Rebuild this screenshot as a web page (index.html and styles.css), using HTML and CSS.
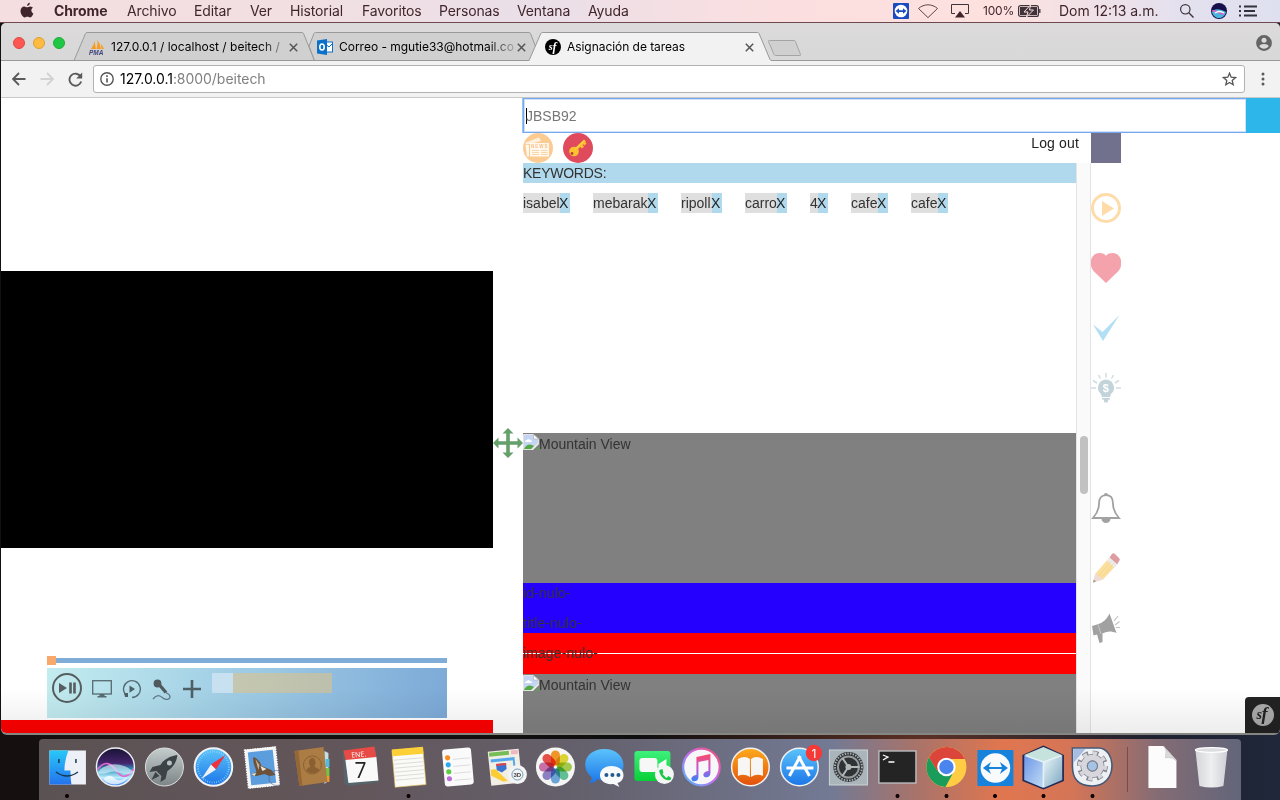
FILE: index.html
```html
<!DOCTYPE html>
<html lang="es">
<head>
<meta charset="utf-8">
<title>Asignación de tareas</title>
<link rel="stylesheet" href="styles.css">
</head>
<body>
<svg class="defs" width="0" height="0">
  <defs>
    <linearGradient id="gBlue" x1="0" y1="0" x2="0" y2="1"><stop offset="0" stop-color="#5cc3fb"/><stop offset="1" stop-color="#1b76e8"/></linearGradient>
    <linearGradient id="gFinder" x1="0" y1="0" x2="0" y2="1"><stop offset="0" stop-color="#27c8f8"/><stop offset="1" stop-color="#2473ee"/></linearGradient>
    <linearGradient id="gSiri" x1="0" y1="0" x2="0" y2="1"><stop offset="0" stop-color="#171433"/><stop offset=".4" stop-color="#45246c"/><stop offset=".55" stop-color="#2f8fb8"/><stop offset=".78" stop-color="#b9eeff"/><stop offset="1" stop-color="#3a7ff0"/></linearGradient>
    <linearGradient id="gSilver" x1="0" y1="0" x2="0" y2="1"><stop offset="0" stop-color="#c4cccc"/><stop offset="1" stop-color="#7c8486"/></linearGradient>
    <linearGradient id="gOrange" x1="0" y1="0" x2="0" y2="1"><stop offset="0" stop-color="#fdab1d"/><stop offset="1" stop-color="#e2500c"/></linearGradient>
    <linearGradient id="gGreen" x1="0" y1="0" x2="0" y2="1"><stop offset="0" stop-color="#3df17b"/><stop offset="1" stop-color="#08cf37"/></linearGradient>
    <linearGradient id="gNote" x1="0" y1="0" x2="0" y2="1"><stop offset="0" stop-color="#fb4b63"/><stop offset=".55" stop-color="#c158d8"/><stop offset="1" stop-color="#2e86f7"/></linearGradient>
    <linearGradient id="gRing" x1="1" y1="0" x2="0" y2="1"><stop offset="0" stop-color="#f3526b"/><stop offset=".5" stop-color="#c66af0"/><stop offset="1" stop-color="#48bdfc"/></linearGradient>
    <linearGradient id="gTrash" x1="0" y1="0" x2="1" y2="0"><stop offset="0" stop-color="#d4d5d9"/><stop offset=".5" stop-color="#efeff1"/><stop offset="1" stop-color="#cdcfd4"/></linearGradient>
    <linearGradient id="gCubeL" x1="0" y1="0" x2="1" y2="1"><stop offset="0" stop-color="#6c96e8"/><stop offset="1" stop-color="#c2dcf4"/></linearGradient>
    <linearGradient id="gCubeR" x1="0" y1="0" x2="1" y2="1"><stop offset="0" stop-color="#eef8fb"/><stop offset="1" stop-color="#7aa6c0"/></linearGradient>
  </defs>
</svg>

<header class="menubar">
  <svg class="apple" width="16" height="20" viewBox="0 0 16 20"><path d="M8.200 6.300c.8 0 1.700-1 3.200-.9 1.100.1 2 .6 2.500 1.400-2.300 1.400-1.900 4.700.5 5.600-.6 1.700-1.900 4-3.300 4-1 0-1.500-.6-2.700-.6s-1.700.6-2.700.6C3.800 16.400 1.500 12.800 1.500 10c0-2.800 1.800-4.600 3.700-4.600 1.300 0 2.200.9 3 .9zM10.900 1.800c.1 1.600-1.200 3.100-2.800 3.100-.1-1.500 1.300-3 2.800-3.100z" fill="#40262c"/></svg>
  <nav class="menus">
    <b class="m1">Chrome</b><span class="m2">Archivo</span><span class="m3">Editar</span><span class="m4">Ver</span><span class="m5">Historial</span><span class="m6">Favoritos</span><span class="m7">Personas</span><span class="m8">Ventana</span><span class="m9">Ayuda</span>
  </nav>
  <div class="status">
    <svg width="16" height="16" viewBox="0 0 16 16"><rect width="16" height="16" rx="1" fill="#1a4ac0"/><circle cx="8" cy="8" r="6.300" fill="#fff"/><path d="M2.600 8l3.400-2.700v1.900h4V5.300L13.400 8 10 10.700V8.900H6v1.800z" fill="#1a4ac0"/></svg>
    <svg class="wifi" width="22" height="16" viewBox="0 0 22 16"><path d="M1.500 5.500C7 .6 15 .6 20.500 5.500L11 14.600z" fill="none" stroke="#5c474c"/></svg>
    <svg class="airplay" width="20" height="16" viewBox="0 0 20 16"><path d="M5 10.500H1.500v-9h17v9H15" fill="none" stroke="#40323a"/><path d="M10 8l5 6.500H5z" fill="#40262c"/></svg>
    <span class="pct">100%</span>
    <svg class="battery" width="24" height="12" viewBox="0 0 24 12"><rect x=".6" y=".6" width="19.800" height="10.800" rx="2" fill="none" stroke="#40323a" stroke-width="1.200"/><rect x="2" y="2" width="17" height="8" fill="#40323a"/><path d="M12.500 0L6 7h4l-1.500 5L15.500 5h-4z" fill="#40323a" stroke="#fbe2e2"/><path d="M21.800 4v4" stroke="#40323a" stroke-width="1.300"/></svg>
    <span class="clock">Dom 12:13 a.m.</span>
    <svg class="search" width="16" height="16" viewBox="0 0 16 16"><circle cx="6.300" cy="6.300" r="4.700" fill="none" stroke="#40323a" stroke-width="1.200"/><path d="M9.800 9.800l4.700 4.700" stroke="#40323a" stroke-width="1.400"/></svg>
    <svg class="siri" width="16" height="16" viewBox="0 0 16 16"><circle cx="8" cy="8" r="8" fill="#17104a"/><path d="M1 9c3-4 8-3 14 0-1 4-4 6-7 6S2 13 1 9z" fill="#49b6de"/><path d="M1 8c4-2 6 3 12 3" stroke="#dc59c4" stroke-width="1.500" fill="none"/><path d="M4 10c3-2 6-2 9 0" stroke="#fff" stroke-width="1.500" fill="none"/></svg>
    <svg width="19" height="12" viewBox="0 0 19 12"><path d="M5 1.500h13M5 6h11M5 10.500h13" stroke="#33323c" stroke-width="2"/><path d="M0 1.500h2M0 6h2M0 10.500h2" stroke="#33323c" stroke-width="2"/></svg>
  </div>
</header>

<div class="window">
  <div class="tabstrip">
    <svg class="tabshape" width="1279" height="38" viewBox="1 23 1279 38">
      <path d="M74 60.500L85.500 33.500Q86 32.500 87 32.500H302Q303 32.500 303.500 33.500L314.500 60.500z" fill="#d0d0d0" stroke="#999"/>
      <path d="M309 46L314 33.500Q314.500 32.500 315.500 32.500H529Q530 32.500 530.500 33.500L541 60.500H314.500z" fill="#d0d0d0" stroke="#999"/>
      <path d="M1 60.500H1280" stroke="#999"/>
      <path d="M529 61L541 33.500Q541.500 32.500 542.500 32.500H757.500Q758.500 32.500 759 33.500L770 59.500L771.500 61z" fill="#f2f2f2"/>
      <path d="M529 60.500L540.800 33.500Q541.300 32.500 542.300 32.500H757.500Q758.500 32.500 759 33.500L770 59.500Q770.500 60.500 772 60.500" fill="none" stroke="#999"/>
      <path d="M769.500 40.500H794Q795 40.500 795.500 41.500L800.500 54.500Q801 55.500 800 55.500H775.500Q774.500 55.500 774 54.500L768.500 41.500Q768 40.500 769.500 40.500z" fill="#d0d0d0" stroke="#a5a5a5"/>
    </svg>
    <div class="lights"><i class="red"></i><i class="yellow"></i><i class="green"></i></div>
    <div class="tab t1">
      <svg width="16" height="16" viewBox="0 0 16 16"><path d="M2 10Q5 6 5.500 2l1.500 8zM7.500 10Q9 5 8.500 1q3 4 3.500 9zM12.500 10l-.5-5q2 2 3 5z" fill="#f89c21"/><text x="0" y="15.500" class="pma">PMA</text></svg>
      <span class="label fade">127.0.0.1 / localhost / beitech /</span>
      <svg class="x" width="9" height="9" viewBox="0 0 9 9"><path d="M.8.8l7.400 7.400M8.200.8L.8 8.200" stroke="#555" stroke-width="1.500"/></svg>
    </div>
    <div class="tab t2">
      <svg width="16" height="16" viewBox="0 0 16 16"><rect x="7" y="3" width="8.500" height="10" fill="#fff" stroke="#0a70c8"/><path d="M9 5.500l3 2.500 3.500-3.500" stroke="#0a70c8" fill="none"/><path d="M0 1.500L10 0v16L0 14.500z" fill="#0a70c8"/><ellipse cx="5" cy="8" rx="2.200" ry="3" fill="none" stroke="#fff" stroke-width="1.600"/></svg>
      <span class="label fade">Correo - mgutie33@hotmail.co</span>
      <svg class="x" width="9" height="9" viewBox="0 0 9 9"><path d="M.8.8l7.400 7.400M8.200.8L.8 8.200" stroke="#555" stroke-width="1.500"/></svg>
    </div>
    <div class="tab t3">
      <svg width="16" height="16" viewBox="0 0 16 16"><circle cx="8" cy="8" r="8" fill="#000"/><text x="3.800" y="11" class="sf" fill="#fff">s<tspan dy="1" dx="-.3" class="sff">f</tspan></text></svg>
      <span class="label">Asignación de tareas</span>
      <svg class="x" width="9" height="9" viewBox="0 0 9 9"><path d="M.8.8l7.400 7.400M8.200.8L.8 8.200" stroke="#555" stroke-width="1.500"/></svg>
    </div>
    <svg class="profile" width="16" height="16" viewBox="0 0 16 16"><circle cx="8" cy="8" r="7.900" fill="#646464"/><circle cx="8" cy="5.300" r="2.500" fill="#dadada"/><path d="M3.300 11.300c1-3 8.400-3 9.400 0-2 3.200-7.400 3.200-9.400 0z" fill="#dadada"/></svg>
  </div>

  <div class="toolbar">
    <svg class="back" width="14" height="14" viewBox="0 0 14 14"><path d="M13.500 7H1.500M7 1L1 7l6 6" fill="none" stroke="#5a5a5a" stroke-width="1.800"/></svg>
    <svg class="fwd" width="14" height="14" viewBox="0 0 14 14"><path d="M.5 7h12M7 1l6 6-6 6" fill="none" stroke="#d2d2d2" stroke-width="1.800"/></svg>
    <svg class="reload" width="15" height="15" viewBox="0 0 15 15"><path d="M12.600 4.500A6 6 0 1 0 13.200 9.500" fill="none" stroke="#5a5a5a" stroke-width="1.900"/><path d="M14.200.5v6H8.200z" fill="#5a5a5a"/></svg>
    <div class="omnibox">
      <svg width="14" height="14" viewBox="0 0 14 14"><circle cx="7" cy="7" r="6.200" fill="none" stroke="#555" stroke-width="1.400"/><path d="M7 6.200v4.400M7 3.300v1.700" stroke="#555" stroke-width="1.600"/></svg>
      <span class="url">127.0.0.1<em>:8000/beitech</em></span>
      <svg class="star" width="15" height="14" viewBox="0 0 15 14"><path d="M7.500 1.200l1.700 4 4.300.4-3.300 2.800 1 4.300-3.700-2.300-3.700 2.300 1-4.300L1.500 5.600l4.300-.4z" fill="none" stroke="#555" stroke-width="1.300"/></svg>
    </div>
    <svg class="dots" width="4" height="14" viewBox="0 0 4 14"><g fill="#5a5a5a"><circle cx="2" cy="2" r="1.500"/><circle cx="2" cy="7" r="1.500"/><circle cx="2" cy="12" r="1.500"/></g></svg>
  </div>

  <main class="page">
    <section class="left">
      <div class="video"></div>
      <div class="player">
        <div class="track"><i class="knob"></i></div>
        <div class="controls">
          <svg class="c1" width="30" height="30" viewBox="0 0 30 30"><circle cx="15" cy="15" r="14" fill="none" stroke="#555d5f" stroke-width="2"/><path d="M7 10v10l8-5z" fill="#555d5f"/><path d="M18.500 9.500v11M22.500 9.500v11" stroke="#555d5f" stroke-width="2.600"/></svg>
          <svg class="c2" width="20" height="18" viewBox="0 0 20 18"><rect x=".7" y=".7" width="18.600" height="13.300" fill="none" stroke="#566a70" stroke-width="1.300"/><path d="M7.500 14h5v2h2v1.500h-9V16h2z" fill="#566a70"/></svg>
          <svg class="c3" width="20" height="20" viewBox="0 0 20 20"><path d="M3.500 15.500A8.400 8.400 0 1 1 10 18.500" fill="none" stroke="#556c76" stroke-width="1.400"/><path d="M7.500 6.500v7.200l5.500-3.600zM2 14h4v4H3z" fill="#4f5f66"/></svg>
          <svg class="c4" width="20" height="21" viewBox="0 0 20 21"><circle cx="5.500" cy="4.500" r="3.900" fill="#505a5e"/><path d="M7.500 6l6.500 7.500" stroke="#505a5e" stroke-width="3.300"/><path d="M1 20c4-5 7-3.500 10-1s7 1.500 7-1.500c0-2-2-2.500-4-4" fill="none" stroke="#607985" stroke-width="1.300"/></svg>
          <svg class="c5" width="18" height="18" viewBox="0 0 18 18"><path d="M9 0v18M0 9h18" stroke="#4f5f66" stroke-width="2.600"/></svg>
          <div class="volume"><i></i></div>
        </div>
      </div>
      <div class="redbar"></div>
    </section>

    <div class="handle">
      <svg width="30" height="30" viewBox="0 0 30 30"><path d="M15 0l5.500 5.500h-3.700v7.700h7.700V9.500L30 15l-5.500 5.500v-3.700h-7.700v7.700h3.700L15 30l-5.500-5.500h3.700v-7.700H5.500v3.700L0 15l5.500-5.500v3.700h7.700V5.500H9.500z" fill="#64a06a"/></svg>
    </div>

    <section class="right">
      <div class="searchrow">
        <div class="searchbox"><i class="caret"></i><span>JBSB92</span></div>
        <div class="go"></div>
      </div>
      <div class="cols">
        <div class="feed">
          <div class="actions">
            <svg width="30" height="30" viewBox="0 0 30 30"><circle cx="15" cy="15" r="15" fill="#fccb92"/><path d="M1.500 10L16 4.500 18 8l-14 3.500z" fill="#fff1e0"/><path d="M7 10h19v13.500H7zM2.500 12H6v11.500H4z" fill="#fff8ee"/><path d="M9 17.500h7M9 19.500h7M9 21.500h7M18 17.500h6.500M18 19.500h6.500M18 21.500h6.500" stroke="#fccb92" stroke-width=".8"/><text x="8" y="15" class="news">NEWS</text></svg>
            <svg width="30" height="30" viewBox="0 0 30 30"><circle cx="15" cy="15" r="15" fill="#e04a5d"/><path d="M12 17L22 7.500M17.500 12l2.500 2.500M20.500 9.500l2 2" stroke="#fbc12f" stroke-width="3"/><circle cx="11" cy="18.500" r="4.800" fill="#fbc12f"/><circle cx="9" cy="20.500" r="1.400" fill="#b83c48"/><path d="M12 16.500L21.500 7.500" stroke="#fbd84f" stroke-width="1"/></svg>
            <span class="logout">Log out</span>
          </div>
          <div class="scroller">
            <div class="list">
              <div class="kw">KEYWORDS:</div>
              <div class="tags">
                <span class="tag w1">isabel<b>X</b></span><span class="tag w2">mebarak<b>X</b></span><span class="tag w3">ripoll<b>X</b></span><span class="tag w4">carro<b>X</b></span><span class="tag w5">4<b>X</b></span><span class="tag w6">cafe<b>X</b></span><span class="tag w7">cafe<b>X</b></span>
              </div>
              <div class="card">
                <div class="thumb"><svg width="16" height="16" viewBox="0 0 16 16"><path d="M.5.500h10l5 4.500v3L9 15.500H.5z" fill="#c3d5f2" stroke="#e3e3e3"/><path d="M10.500.5V5h5z" fill="#fff" stroke="#aaa" stroke-width=".6"/><path d="M2 8q0-2 2-2 1-2 3 0 2 0 2 2z" fill="#fff"/><path d="M1 15q3-6 8-4l2 1-3 3zM12 15.500l3.500-3v3z" fill="#55a844"/><path d="M8 16l8-8v2l-6 6z" fill="#eee"/></svg>Mountain View</div>
                <div class="meta"><p>id-nulo-</p><p>title-nulo-</p></div>
                <div class="img"><p>image-nulo-</p></div>
              </div>
              <div class="card">
                <div class="thumb"><svg width="16" height="16" viewBox="0 0 16 16"><path d="M.5.500h10l5 4.500v3L9 15.500H.5z" fill="#c3d5f2" stroke="#e3e3e3"/><path d="M10.500.5V5h5z" fill="#fff" stroke="#aaa" stroke-width=".6"/><path d="M2 8q0-2 2-2 1-2 3 0 2 0 2 2z" fill="#fff"/><path d="M1 15q3-6 8-4l2 1-3 3zM12 15.500l3.500-3v3z" fill="#55a844"/><path d="M8 16l8-8v2l-6 6z" fill="#eee"/></svg>Mountain View</div>
              </div>
            </div>
            <div class="scrollbar"><i></i></div>
          </div>
        </div>
        <aside class="rail">
          <i class="block"></i>
          <svg width="30" height="30" viewBox="0 0 30 30"><circle cx="15" cy="15" r="13.500" fill="none" stroke="#fedba8" stroke-width="3"/><path d="M11 8v15l12-7.500z" fill="#fedba8"/></svg>
          <svg width="30" height="30" viewBox="0 0 30 30"><path d="M15 30L2.500 18C-3 11 0 0 8.500 0 12 0 14 1 15 3c1-2 3-3 6.500-3C30 0 33 11 27.500 18z" fill="#f4a3ac"/></svg>
          <svg width="30" height="30" viewBox="0 0 30 30"><path d="M2 11.500L11.500 19 28.500 2 12 28z" fill="#b2dff3"/></svg>
          <svg class="bulb" width="30" height="30" viewBox="0 0 30 30"><path d="M15 6.500a8.200 8.200 0 0 1 5 14.500l-1 3h-8l-1-3a8.200 8.200 0 0 1 5-14.500zM11 25h8v1.500h-1.500l-1 3h-3l-1-3H11z" fill="#c3d3da"/><path d="M15 0v4.500M7.500 2l2 3.500M22.500 2l-2 3.500M2 7.500l4 2.500M28 7.500L24 10M0 15h5M25 15h5" stroke="#cfdce1" stroke-width="1.500"/><text x="11.800" y="19" class="dollar">$</text></svg>
          <svg class="bell" width="30" height="30" viewBox="0 0 30 30"><path d="M15 2.200c-5 0-7 3.500-7 8.300 0 6-1.500 9.500-6 14.500h26c-4.500-5-6-8.500-6-14.500 0-4.800-2-8.300-7-8.300z" fill="#fff" stroke="#a2a2a2" stroke-width="1.800"/><path d="M13 2a2 2 0 0 1 4 0zM10.500 26h9a4.500 4 0 0 1-9 0z" fill="#a2a2a2"/></svg>
          <svg width="30" height="30" viewBox="0 0 30 30"><path d="M2 29.500l2.500-9L18 5l7.500 7L12 26.500z" fill="#fbdf9c"/><path d="M2 29.500l2.500-9c2 .5 3 1.500 3 3 2 0 4 1 4.500 3z" fill="#efdbd8"/><path d="M16 7.500l2.500-3 8 7-3 3.200z" fill="#ececec"/><path d="M18.500 4.500L21 1q1-1.500 3 0l4 4q1.500 1.500 0 3.300l-1.800 3z" fill="#dc9da3"/><path d="M2 29.500l.8-3 2.200 2.100z" fill="#999"/><path d="M7.500 23L20 8.500M10.500 24.500L23 10" stroke="#f0cc85" stroke-width=".5"/></svg>
          <svg width="30" height="30" viewBox="0 0 30 30"><path d="M1 13l5-1.500C12 10 16 6 18.500.5L25.500 20c-5-2-9-2-13 0l-1 .5 0 8.500-3 1L6 21.500l-3.500 1z" fill="#a1a1a1"/><path d="M7 11.500l3 9.500" stroke="#ddd" stroke-width=".6"/><path d="M23 8l4-5M24 12l4.500-3.500M25 14.500h4" stroke="#c4c4c4" stroke-width="1.200"/></svg>
        </aside>
      </div>
    </section>
    <div class="sfbar"><svg width="22" height="22" viewBox="0 0 22 22"><circle cx="11" cy="11" r="11" fill="#aaa"/><text x="4.500" y="14.800" class="sfbig" fill="#222">s<tspan dy="1.500" dx="-.5" class="sfbigf">f</tspan></text></svg></div>
    <div class="shade"></div>
  </main>
</div>

<footer class="dockwrap">
  <div class="dock">
    <svg class="on" viewBox="0 0 48 61"><rect x="6" y="11.500" width="36.500" height="34" fill="#edf0f6"/><path d="M6 11.500h19q-4 10-4 20h6q0 8 1 14H6z" fill="url(#gFinder)"/><path d="M15.500 20v4M32.500 20v4" stroke="#17384e" stroke-width="1.500"/><path d="M12.500 33q11 8 22 0" fill="none" stroke="#17384e" stroke-width="1.500"/></svg>
    <svg viewBox="0 0 48 61"><circle cx="24" cy="28" r="19" fill="url(#gSiri)" stroke="#f0f0f4" stroke-width="1.400"/><path d="M6 31c8-12 15-5 20 2s11 5 16-3" fill="none" stroke="#e169cd" stroke-width="1.600"/><path d="M6 34c8-12 26-11 36-1-3 4-11 2-17 0s-12 4-19 1z" fill="#dffaff" opacity=".6"/><path d="M12 40c6-6 10-2 12 0s7 2 12-2c-4 9-19 10-24 2z" fill="#fff" opacity=".7"/></svg>
    <svg viewBox="0 0 48 61"><circle cx="24" cy="28" r="19" fill="url(#gSilver)" stroke="#dce0e0"/><path d="M37 16c-8 1-14 5-17 10l-8 2-3 5 7-1 5 5-1 6 5-3 2-8c5-3 9-8 10-16z" fill="#3c4245"/><circle cx="29" cy="24" r="2.500" fill="#b8c0c0"/><path d="M11 41l4-8 4 4z" fill="#3c4245"/></svg>
    <svg viewBox="0 0 48 61"><circle cx="24" cy="28" r="18.800" fill="url(#gBlue)" stroke="#f0f2f4" stroke-width="2"/><circle cx="24" cy="28" r="15.500" fill="none" stroke="#a5defa" stroke-width="2" stroke-dasharray=".6 1.700"/><path d="M36 16L21.500 25.500l5 5z" fill="#f0323a"/><path d="M12 40l9.500-14.500 5 5z" fill="#f2f2f4"/></svg>
    <svg viewBox="0 0 48 61"><g transform="rotate(-6 24 28)"><rect x="9.500" y="10.500" width="28" height="36" fill="#5b9ddd" stroke="#f4f4f4" stroke-width="3"/><path d="M8 9.500h31v38H8z" fill="none" stroke="#fff" stroke-width="1.500" stroke-dasharray="1.500 1"/></g><path d="M15 18c4 1 7 5 8 9l10 4 4 5-6 1-5-2-8 2-5-1 5-3c-1-5-4-9-3-15z" fill="#6d5238"/><path d="M17 20l4 6-1 5z" fill="#c8b49a"/><path d="M22 27l6 3-4 2z" fill="#f2e8da"/><path d="M13 35l5-1-2 3z" fill="#eadfca"/><circle cx="38" cy="39" r="7.500" fill="none" stroke="#595c73" opacity=".6"/></svg>
    <svg viewBox="0 0 48 61"><path d="M37 12l4 2v28l-4 3z" fill="#c8dddf"/><path d="M38 20h4v8h-4z" fill="#52bce0"/><path d="M38 29h4v8h-4z" fill="#75c448"/><path d="M38 37h4v6h-4z" fill="#f09a2c"/><path d="M7 12l29-4 4 35-28 4z" fill="#ab7c43"/><path d="M7 12l4-.5L15 46.500l-3 .5z" fill="#946735"/><circle cx="25" cy="26" r="9" fill="none" stroke="#8d6233"/><path d="M19 32c1-5 4-3 4-5-3-3-1-8 2-8s4 5 2 8c0 2 3 1 5 4-3 4-9 4-13 1z" fill="#8a6032"/></svg>
    <svg viewBox="0 0 48 61"><path d="M6 12l33-4 4 35-30 4-5-2z" fill="#56646b"/><path d="M7 11.500l31-4 2 11-31 3z" fill="#e84a45"/><path d="M9 21l31-3 2 23.500L12 44z" fill="#f9f9f9"/><text x="15" y="18" class="ene" transform="rotate(-5 22 18)">ENE.</text><text x="18" y="39" class="seven">7</text></svg>
    <svg class="on" viewBox="0 0 48 61"><g transform="rotate(-5 24 28)"><rect x="9" y="10" width="31" height="37" fill="#fafaf7" stroke="#e4c55a" stroke-width=".6"/><rect x="9" y="9" width="31" height="7" fill="#fdd037"/><path d="M10 20h29M10 24h29M10 28h29M10 32h29M10 36h29M10 40h29" stroke="#d0d0d0" stroke-width=".7"/></g></svg>
    <svg viewBox="0 0 48 61"><g transform="rotate(-5 24 28)"><rect x="10" y="9.500" width="29" height="37" rx="3" fill="#fafafa"/><circle cx="15" cy="18" r="2.600" fill="#f88d22"/><circle cx="15" cy="25" r="2.600" fill="#2fa9ee"/><circle cx="15" cy="32" r="2.600" fill="#5bcc43"/><circle cx="15" cy="39" r="2.600" fill="#be6add"/><path d="M20 20h17M20 27h17M20 34h17M20 41h17" stroke="#d2d2d2" stroke-width=".7"/></g></svg>
    <svg viewBox="0 0 48 61"><g transform="rotate(-6 24 28)"><rect x="7" y="11" width="31" height="34" fill="#f1eee4"/><path d="M8 12h20v4H8z" fill="#77bd57"/><path d="M9 19h24v18h-2V22H9z" fill="#55a8ee"/><path d="M30 12h7v4h-7z" fill="#f0b6c2"/><path d="M8 29h5l11 13h-5L8 35z" fill="#fbcc34"/><path d="M14 24h10v6l-5 3-5-3z" fill="#3a74ce"/><path d="M14 24h10v2H14z" fill="#e54349"/></g><circle cx="35" cy="35.500" r="9.500" fill="#f4f4f6"/><circle cx="35" cy="35.500" r="5.500" fill="none" stroke="#6d9cb8"/><text x="31" y="38" class="three">3D</text></svg>
    <svg viewBox="0 0 48 61"><circle cx="24" cy="28" r="19.500" fill="#f5f5f4"/><g class="petals"><rect x="19.500" y="11.500" width="9" height="15" rx="4.500" fill="#fa9c29"/><rect x="19.500" y="11.500" width="9" height="15" rx="4.500" fill="#e3dc35" transform="rotate(45 24 28)"/><rect x="19.500" y="11.500" width="9" height="15" rx="4.500" fill="#a9d150" transform="rotate(90 24 28)"/><rect x="19.500" y="11.500" width="9" height="15" rx="4.500" fill="#65c79c" transform="rotate(135 24 28)"/><rect x="19.500" y="11.500" width="9" height="15" rx="4.500" fill="#70abe1" transform="rotate(180 24 28)"/><rect x="19.500" y="11.500" width="9" height="15" rx="4.500" fill="#9186cb" transform="rotate(225 24 28)"/><rect x="19.500" y="11.500" width="9" height="15" rx="4.500" fill="#cf75af" transform="rotate(270 24 28)"/><rect x="19.500" y="11.500" width="9" height="15" rx="4.500" fill="#ee524c" transform="rotate(315 24 28)"/></g></svg>
    <svg viewBox="0 0 48 61"><path d="M24 10c24 0 25 29 5 31-6 1-10 0-12-1-2 3-5 4-9 4 3-2 4-4 3-6C-1 28 5 10 24 10z" fill="url(#gBlue)"/><path d="M31 27c15 0 15 15 6 17l2 4-6-3c-17 2-18-18-2-18z" fill="#f7f9fb"/><g fill="#24598f"><circle cx="26" cy="36" r="2"/><circle cx="32" cy="36" r="2"/><circle cx="38" cy="36" r="2"/></g></svg>
    <svg viewBox="0 0 48 61"><rect x="5" y="12" width="36" height="30" rx="3" fill="url(#gGreen)"/><rect x="10" y="19" width="18" height="14" rx="3" fill="#f7f7f7"/><path d="M29 25l8-5v12l-8-4z" fill="#f7f7f7"/><circle cx="35" cy="35.500" r="9.500" fill="#f4f5f5"/><path d="M30 31l3-1 1 4-1 1 4 4 2-2 3 2-1 2c-6 2-12-6-11-10z" fill="#19c747"/></svg>
    <svg viewBox="0 0 48 61"><circle cx="24" cy="28" r="18.300" fill="#f7f7fa" stroke="url(#gRing)" stroke-width="2.200"/><path d="M19 18l14-3v19c0 6-8 5-7 1 1-2 3-3 5-3V21l-10 2v15c0 6-8 5-7 1 1-2 3-3 5-3z" fill="url(#gNote)"/></svg>
    <svg viewBox="0 0 48 61"><circle cx="24" cy="28" r="18.800" fill="url(#gOrange)" stroke="#f2f2f2" stroke-width="1.500"/><path d="M23.500 20q-5-4-12 0v17q6-3 12 1zM24.500 20q5-4 12 0v17q-6-3-12 1z" fill="#f7f6f4"/></svg>
    <svg viewBox="0 0 48 61"><circle cx="24" cy="28" r="18.800" fill="url(#gBlue)" stroke="#f2f2f2" stroke-width="1.500"/><path d="M25 17L14 37M23 17l11 20M11 29h27" stroke="#fff" stroke-width="3" fill="none"/><circle cx="38.500" cy="14" r="8.200" fill="#f43a37"/><text x="36" y="18.500" class="badge">1</text></svg>
    <svg viewBox="0 0 48 61"><rect x="5" y="11" width="38" height="35" fill="#a9b5ba" stroke="#ccd4d7"/><circle cx="24" cy="28" r="15" fill="#2f3335"/><circle cx="24" cy="28" r="13.500" fill="none" stroke="#a8adaf" stroke-width="2" stroke-dasharray="1.500 1.200"/><circle cx="24" cy="28" r="10.500" fill="none" stroke="#969b9d" stroke-width="2"/><path d="M24 28H35M24 28l-6-9M24 28l-6 9" stroke="#b3b7b8" stroke-width="2"/><circle cx="24" cy="28" r="3" fill="#b3b7b8"/></svg>
    <svg class="on" viewBox="0 0 48 61"><rect x="5.500" y="12" width="37" height="32" fill="#242424" stroke="#c1c4c7" stroke-width="1.300"/><path d="M9.500 16l5 2-5 3M15 23h6" fill="none" stroke="#fff" stroke-width="1.300"/></svg>
    <svg class="on" viewBox="0 0 48 61"><circle cx="24" cy="28" r="20" fill="#fc4"/><path d="M6.500 18.500A20 20 0 0 1 42.500 20H24l-8.500 13z" fill="#dc453a"/><path d="M6.500 18.500A20 20 0 0 0 23 48l8.500-15.500L15 32z" fill="#1a9c5b"/><circle cx="24" cy="28" r="9.200" fill="#fff"/><circle cx="24" cy="28" r="7.200" fill="#4a85ef"/></svg>
    <svg class="on" viewBox="0 0 48 61"><rect x="6" y="11" width="36" height="36" rx="1" fill="#1682dc"/><circle cx="24" cy="29" r="14.800" fill="#f9fafb"/><path d="M11.500 29l8-6-2 5h13l-2-5 8 6-8 6 2-5h-13l2 5z" fill="#1682dc"/></svg>
    <svg class="on" viewBox="0 0 48 61"><path d="M24 6.500l20.500 9.500v26L24 50.500 3 42V16z" fill="#1f2754"/><path d="M24 8L42.500 16 24 23 4.800 16z" fill="#c5e2dc"/><path d="M4.800 16L24 23v26L4.800 41z" fill="url(#gCubeL)"/><path d="M42.800 16L24 23v26l18.800-8z" fill="url(#gCubeR)"/><path d="M6 16.500l18 6.500 18-6.500M24 23v25" fill="none" stroke="#e6f3f6" stroke-width="1.500"/></svg>
    <svg class="on" viewBox="0 0 48 61"><path d="M4 9h26c18 0 20 38-6 38C8 47 4 38 4 27z" fill="#eef1f4" stroke="#455975" stroke-width="1.600"/><path d="M5 10h12L5 24z" fill="#a8bde4"/><circle cx="24" cy="27" r="13" fill="none" stroke="#81838c" stroke-width="5" stroke-dasharray="5.600 4.600"/><circle cx="24" cy="27" r="8.500" fill="none" stroke="#81838c" stroke-width="7"/><circle cx="24" cy="27" r="8.500" fill="none" stroke="#d6d6dc" stroke-width="5.500"/><circle cx="24" cy="27" r="12.700" fill="none" stroke="#d6d6dc" stroke-width="4" stroke-dasharray="4 6"/><circle cx="24" cy="27" r="5" fill="#a5c3e5" stroke="#737b8b"/></svg>
    <i class="sep"></i>
    <svg viewBox="0 0 48 61"><path d="M10 7h15l13 14v28H10z" fill="#fcfcfc"/><path d="M25 7c4 4 2 8 2 12 4-1 8 0 11 3z" fill="#dadada" stroke="#bbb" stroke-width=".5"/></svg>
    <svg viewBox="0 0 48 61"><path d="M8 11h32l-4 36q-12 3-24 0z" fill="url(#gTrash)"/><ellipse cx="24" cy="11" rx="16" ry="2.300" fill="#dcdddf" stroke="#fff" stroke-width="1.200"/></svg>
  </div>
</footer>
</body>
</html>
```
FILE: styles.css
```css
* { box-sizing: border-box; }
body {
  margin: 0;
  width: 1280px;
  height: 800px;
  overflow: hidden;
  display: flex;
  flex-direction: column;
  background: linear-gradient(90deg, #15100f 0, #100f10 50%, #5a3025 72%, #1d2130 90%, #20273a 100%);
  font-family: "Liberation Sans", Arial, sans-serif;
  font-size: 14px;
  line-height: 20px;
  color: #333;
}
svg { display: block; flex: none; }
i { display: block; font-style: normal; }
p { margin: 0; letter-spacing: .1px; }
.defs { position: absolute; }

.menubar {
  height: 23px;
  flex: none;
  display: flex;
  align-items: center;
  padding: 0 22px 1px 19px;
  background: linear-gradient(90deg, #f4dedf 0, #f2dfe1 22%, #eadfe8 42%, #fbdfe0 60%, #fde1df 78%, #e4e1ee 92%, #dfe0ef 100%);
  border-bottom: 1px solid #6e4a50;
  font: 14px/22px Inter, "Noto Sans", sans-serif;
  color: #40262c;
}
.apple { margin-top: 1px; }
.menus { display: flex; padding-left: 19px; letter-spacing: -.13px; white-space: nowrap; }
.m1 { width: 73px; }
.m2 { width: 67px; }
.m3 { width: 56px; }
.m4 { width: 40px; }
.m5 { width: 72px; }
.m6 { width: 77px; }
.m7 { width: 78px; }
.m8 { width: 71px; }
.status { margin-left: auto; display: flex; align-items: center; white-space: nowrap; }
.wifi { margin-left: 8px; }
.airplay { margin-left: 11px; }
.pct { font-size: 12px; width: 35px; margin-left: 13px; letter-spacing: -.2px; }
.battery { width: 24px; }
.clock { width: 120px; margin-left: 17px; letter-spacing: 0; }
.siri { margin: 0 12px 0 16px; }

.window {
  width: 1279px;
  height: 712px;
  margin-left: 1px;
  flex: none;
  border-radius: 5px 5px 6px 6px;
  overflow: hidden;
  background: #858582;
  display: flex;
  flex-direction: column;
}
.tabstrip {
  position: relative;
  height: 38px;
  flex: none;
  display: flex;
  align-items: flex-start;
  background: linear-gradient(#dcdada, #d8d8d8);
  font: 12px/16px Inter, "Noto Sans", sans-serif;
  color: #000;
}
.tabshape { position: absolute; left: 0; top: 0; }
.lights { display: flex; gap: 8px; padding: 14px 0 0 12px; width: 88px; }
.lights i { width: 12px; height: 12px; border-radius: 50%; }
.lights .red { background: #fc5753; border: 1px solid #df4744; }
.lights .yellow { background: #fdbc40; border: 1px solid #de9f34; }
.lights .green { background: #1fc844; border: 1px solid #1fac35; }
.tab { position: relative; display: flex; padding-top: 16px; white-space: nowrap; }
.t1 { width: 228px; }
.t2 { width: 228px; }
.t3 { width: 230px; }
.label { width: 176px; margin-left: 6px; }
.t3 .label { width: 176px; letter-spacing: -.05px; }
.t2 .label { letter-spacing: -.02px; }
.fade { -webkit-mask-image: linear-gradient(90deg, #000 85%, transparent 103%); mask-image: linear-gradient(90deg, #000 85%, transparent 103%); }
.x { margin: 4px 0 0 2px; }
.profile { margin: 12px 0 0 481px; position: relative; }
.pma { font: italic bold 6.500px "Liberation Sans", sans-serif; fill: #40427c; }
.sf { font: italic bold 10px "Liberation Serif", serif; }
.sff { font-size: 12px; }
.sfbig { font: italic bold 14px "Liberation Serif", serif; }
.sfbigf { font-size: 18px; }

.toolbar {
  height: 37px;
  flex: none;
  display: flex;
  align-items: center;
  background: #f2f2f2;
  border-bottom: 1px solid #c8c8c8;
  padding-left: 11px;
}
.fwd { margin-left: 14px; }
.reload { margin-left: 14px; }
.omnibox {
  width: 1152px;
  height: 28px;
  margin-left: 10px;
  display: flex;
  align-items: center;
  padding: 0 7px 0 6px;
  background: #fff;
  border: 1px solid #b2b2b2;
  border-radius: 3px;
  font: 14px/20px Inter, "Noto Sans", sans-serif;
  color: #000;
}
.url { margin-left: 6px; letter-spacing: -.04px; }
.url em { font-style: normal; color: #808080; }
.star { margin-left: auto; }
.dots { margin-left: 16px; }

.page { position: relative; height: 635px; flex: none; display: flex; background: #fff; overflow: hidden; border-radius: 0 0 0 5px; }
.left { width: 492px; display: flex; flex-direction: column; padding-top: 173px; }
.video { height: 277px; background: #000; }
.player { margin: 110px 0 0 46px; width: 400px; }
.track { height: 5px; background: #80add8; }
.knob { position: relative; top: -2px; width: 9px; height: 9px; background: #f8a86a; }
.controls {
  height: 50px;
  margin-top: 5px;
  display: flex;
  align-items: flex-start;
  padding: 5px;
  background: linear-gradient(100deg, #c3ecef 0, #a3d0e6 42%, #7ca9d7 100%);
}
.c2 { margin: 7px 0 0 10px; }
.c3 { margin: 6px 0 0 10px; }
.c4 { margin: 6px 0 0 10px; }
.c5 { margin: 7px 0 0 11px; }
.volume { margin-left: 11px; width: 120px; height: 20px; background: linear-gradient(90deg, #c7c9b1, #bcc0ac); }
.volume i { width: 21px; height: 20px; background: #c8e1f0; }
.redbar { height: 13px; margin-top: 2px; background: #fe0000; }
.handle { width: 30px; padding-top: 330px; }
.right { width: 757px; display: flex; flex-direction: column; }
.searchrow { height: 35px; display: flex; flex: none; }
.searchbox {
  width: 723px;
  display: flex;
  align-items: center;
  color: #777;
  border: 1px solid #74a7ec;
  border-right: 0;
  box-shadow: inset 0 0 0 1px #cfe1fb, -1px 0 0 #9cc2f8;
  padding-left: 2px;
}
.searchbox span { margin-left: -1px; }
.caret { width: 1px; height: 16px; background: #000; }
.go { width: 34px; background: #2db6e9; }
.cols { display: flex; height: 600px; }
.feed { width: 568px; }
.actions { height: 30px; display: flex; gap: 10px; }
.logout { margin-left: auto; padding-right: 12px; color: #222; letter-spacing: .15px; }
.scroller { height: 570px; display: flex; overflow: hidden; }
.list { width: 553px; }
.kw { height: 20px; background: #b0d9ed; letter-spacing: -.25px; }
.tags { display: flex; gap: 23px; height: 250px; padding-top: 10px; align-items: flex-start; }
.tag { display: flex; justify-content: space-between; height: 20px; background: #dfdfdf; }
.tag b { width: 10px; font-weight: normal; background: #b0d9ed; color: #222; text-indent: -1px; }
.w1 { width: 47px; }
.w2 { width: 65px; }
.w3 { width: 41px; }
.w4 { width: 42px; }
.w5 { width: 18px; }
.w6, .w7 { width: 37px; }
.thumb { height: 150px; display: flex; background: #808080; line-height: 22px; color: #333; }
.thumb svg { margin-top: 1px; }
.meta { height: 50px; background: #2600ff; display: flex; flex-direction: column; gap: 10px; }
.img { height: 41px; padding-top: 10px; background: linear-gradient(#f00 20px, #fff 20px, #fff 21px, #f00 21px); }
.scrollbar { width: 15px; background: #fafafa; border: solid #e4e4e4; border-width: 0 1px; padding: 273px 0 0 3px; }
.scrollbar i { width: 8px; height: 58px; border-radius: 4px; background: #c1c1c1; }
.rail { width: 30px; display: flex; flex-direction: column; gap: 30px; }
.block { width: 30px; height: 30px; background: #72718d; }
.bell { margin-top: 60px; }
.news { font: bold 4.500px "Liberation Sans", sans-serif; fill: #f8bf87; letter-spacing: 1px; }
.dollar { font: bold 11px "Liberation Sans", sans-serif; fill: #fff; }
.sfbar { position: absolute; right: 0; bottom: 0; width: 35px; height: 36px; background: #222; border-radius: 4px 0 0 0; padding: 7px; }
.shade { position: absolute; left: 0; right: 0; bottom: 0; height: 45px; background: linear-gradient(transparent, rgba(0, 0, 0, .07)); }

.dockwrap { height: 65px; padding: 4px 39px 0; }
.dock {
  height: 61px;
  display: flex;
  padding-left: 3.500px;
  border-radius: 4px 4px 0 0;
  background: linear-gradient(90deg, #5b5254 0, #63565a 25%, #64606c 45%, #737a94 66%, #a8736a 73%, #e0764f 80%, #d47557 86%, #846c74 93%, #62657a 100%);
}
.dock svg { width: 48.850px; height: 61px; }
.dock .on { background: radial-gradient(circle 3px at 50% 57px, #120404 1.700px, transparent 2.300px); }
.petals rect { mix-blend-mode: multiply; }
.sep { width: 1px; height: 45px; margin: 8px 10px 0; background: #804a42; }
.ene { font: 7px "Open Sans", sans-serif; fill: #fff; }
.seven { font: 21px "Open Sans", sans-serif; fill: #222; }
.three { font: bold 6px "Liberation Sans", sans-serif; fill: #444; }
.badge { font: 12px Inter, sans-serif; fill: #fff; }
```
